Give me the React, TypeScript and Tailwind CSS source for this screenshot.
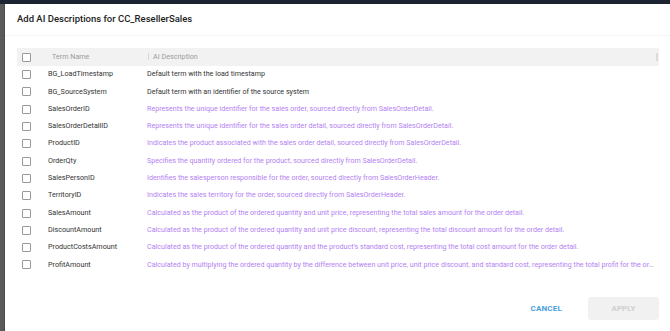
import React from "react";

const rows: [string, string, boolean][] = [
  ["BG_LoadTimestamp", "Default term with the load timestamp", false],
  ["BG_SourceSystem", "Default term with an identifier of the source system", false],
  ["SalesOrderID", "Represents the unique identifier for the sales order, sourced directly from SalesOrderDetail.", true],
  ["SalesOrderDetailID", "Represents the unique identifier for the sales order detail, sourced directly from SalesOrderDetail.", true],
  ["ProductID", "Indicates the product associated with the sales order detail, sourced directly from SalesOrderDetail.", true],
  ["OrderQty", "Specifies the quantity ordered for the product, sourced directly from SalesOrderDetail.", true],
  ["SalesPersonID", "Identifies the salesperson responsible for the order, sourced directly from SalesOrderHeader.", true],
  ["TerritoryID", "Indicates the sales territory for the order, sourced directly from SalesOrderHeader.", true],
  ["SalesAmount", "Calculated as the product of the ordered quantity and unit price, representing the total sales amount for the order detail.", true],
  ["DiscountAmount", "Calculated as the product of the ordered quantity and unit price discount, representing the total discount amount for the order detail.", true],
  ["ProductCostsAmount", "Calculated as the product of the ordered quantity and the product's standard cost, representing the total cost amount for the order detail.", true],
  ["ProfitAmount", "Calculated by multiplying the ordered quantity by the difference between unit price, unit price discount, and standard cost, representing the total profit for the order detail.", true],
];

function Box() {
  return <div className="w-[9px] h-[9px] border border-[#999] rounded-[1px] bg-white" />;
}

export default function App() {
  return (
    <div className="w-[670px] h-[331px] flex flex-col overflow-hidden" style={{ fontFamily: "Roboto, 'Noto Sans', sans-serif" }}>
      <div className="h-[4px] bg-[#1c2331] shrink-0" />
      <div className="flex flex-1 min-h-0">
        <div className="w-[5px] bg-[#5a5a5a] border-r border-[#4a4a4a] shrink-0" />
        <div className="flex-1 bg-white flex flex-col min-w-0">
          <div className="h-[32px] shrink-0 flex items-center px-[12px] border-b border-[#f4f4f4]">
            <span className="text-[9.5px] font-medium text-[#222]">Add AI Descriptions for CC_ResellerSales</span>
          </div>
          <div className="mt-[12px] ml-[12px] mr-[11px] flex flex-col">
            <div className="h-[18px] bg-[#f2f2f2] flex items-center text-[7.2px] text-[#9a9a9a]">
              <div className="w-[31px] pl-[5px] shrink-0"><Box /></div>
              <div className="w-[100px] pl-[4px] shrink-0">Term Name</div>
              <div className="flex-1 flex items-center">
                <div className="w-px h-[7px] bg-[#d8d8d8] mr-[4px]" />
                <span>AI Description</span>
              </div>
              <div className="w-[2px] h-[8px] bg-[#dcdcdc] mr-[1px]" />
            </div>
            {rows.map(([n, d, ai]) => (
              <div key={n} className="h-[17.3px] flex items-center text-[7.2px]">
                <div className="w-[31px] pl-[5px] shrink-0"><Box /></div>
                <div className="w-[99px] shrink-0 text-[#333]">{n}</div>
                <div className={"flex-1 min-w-0 truncate pr-[3px] text-[7.15px] " + (ai ? "text-[#b47ff2]" : "text-[#333]")}>{d}</div>
              </div>
            ))}
          </div>
          <div className="flex-1" />
          <div className="h-[23px] mb-[11px] shrink-0 flex items-center justify-end pr-[11px]">
            <span className="text-[8px] font-bold text-[#4a9fe0] mr-[26px] tracking-[0.2px]">CANCEL</span>
            <div className="w-[71px] h-[23px] bg-[#f1f1f1] rounded-[3px] flex items-center justify-center text-[8px] font-bold text-[#cfcfcf]">APPLY</div>
          </div>
        </div>
      </div>
    </div>
  );
}
